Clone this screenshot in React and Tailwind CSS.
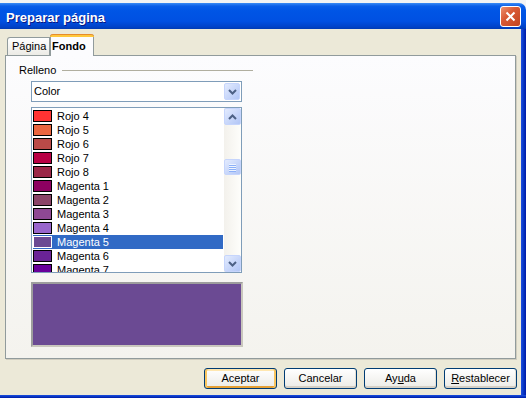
import React from 'react';

const colors = [
  { name: 'Rojo 4', hex: '#ff3333' },
  { name: 'Rojo 5', hex: '#ea6640' },
  { name: 'Rojo 6', hex: '#b94a48' },
  { name: 'Rojo 7', hex: '#b80044' },
  { name: 'Rojo 8', hex: '#9b2748' },
  { name: 'Magenta 1', hex: '#8d0061' },
  { name: 'Magenta 2', hex: '#8a4468' },
  { name: 'Magenta 3', hex: '#8e4893' },
  { name: 'Magenta 4', hex: '#9966cc' },
  { name: 'Magenta 5', hex: '#6b4a93' },
  { name: 'Magenta 6', hex: '#6a2396' },
  { name: 'Magenta 7', hex: '#68009a' },
];

const Chevron = ({ up }) => (
  <svg width="9" height="6" viewBox="0 0 9 6" className="text-[#4d6185]">
    <path d={up ? 'M1 5 L4.5 1.5 L8 5' : 'M1 1 L4.5 4.5 L8 1'} fill="none" stroke="currentColor" strokeWidth="2" />
  </svg>
);

const XpArrowButton = ({ up, className = '' }) => (
  <div className={`flex items-center justify-center rounded-[2px] border border-[#c6d5fc] bg-gradient-to-br from-[#e3ebfe] to-[#b2c6f6] ${className}`}>
    <Chevron up={up} />
  </div>
);

const Button = ({ children, isDefault }) => (
  <div
    className={`w-[73px] h-[21px] rounded-[3px] border border-[#003c74] bg-gradient-to-b from-white to-[#ecebe6] flex items-center justify-center ${
      isDefault
        ? 'shadow-[inset_2px_0_0_#f8c560,inset_-2px_0_0_#f8c560,inset_0_-2px_0_#e5a035,inset_0_2px_0_#ffe7b0]'
        : 'shadow-[inset_0_-2px_0_#d6d0c5,inset_-1px_0_0_#e3e0d6]'
    }`}
  >
    {children}
  </div>
);

export default function App() {
  return (
    <div className="w-[526px] h-[398px] overflow-hidden flex flex-col bg-[#f4f4f4] font-['Liberation_Sans',sans-serif] text-[11px] leading-[13px] text-black select-none">
      <div className="h-[3px] shrink-0" />

      {/* title bar */}
      <div className="h-[26px] shrink-0 flex items-center justify-between rounded-tr-[7px] bg-[linear-gradient(to_bottom,#3b8cf5_0%,#0a5ee8_12%,#0055e5_30%,#0050e2_70%,#0042c8_92%,#003bb3_100%)] pl-[6px] pr-[5px]">
        <span className="pt-[2px] text-white font-bold text-[13px] [text-shadow:1px_1px_0_#0a1883]">Preparar página</span>
        <div className="w-[21px] h-[21px] rounded-[3px] border border-white bg-[linear-gradient(135deg,#ec9070,#d95a35_40%,#c2441f)] flex items-center justify-center">
          <svg width="11" height="11" viewBox="0 0 11 11">
            <path d="M1.5 1.5 L9.5 9.5 M9.5 1.5 L1.5 9.5" stroke="white" strokeWidth="2" />
          </svg>
        </div>
      </div>

      <div className="flex flex-1">
        <div className="flex-1 bg-[#ece9d8] flex flex-col pl-[5px] pt-[5px]">
          {/* tabs */}
          <div className="flex items-end h-[21px] ml-[2px]">
            <div className="w-[43px] h-[18px] border border-b-0 border-[#919b9c] rounded-tl-[3px] bg-gradient-to-b from-white to-[#ecebe6] flex items-center pl-[4px]">
              Página
            </div>
            <div className="relative z-10 -mb-px w-[44px] h-[22px] border-x border-[#919b9c] rounded-t-[3px] bg-[#fcfcfe] flex flex-col">
              <div className="h-[3px] -mx-px rounded-t-[3px] bg-[#ffc83c] border-t border-[#e68b2c]" />
              <div className="flex-1 flex items-center pl-[1px] font-bold">Fondo</div>
            </div>
          </div>

          {/* tab panel */}
          <div className="w-[511px] h-[304px] border border-[#919b9c] shadow-[1px_1px_0_#d0cdbf] bg-gradient-to-b from-[#fcfcfe] to-[#f4f3ee] flex flex-col pl-[13px] pt-[8px]">
            <div className="w-[234px] h-[13px] flex items-center">
              <span>Relleno</span>
              <div className="flex-1 ml-[6px] h-px bg-[#b0ae9f]" />
            </div>

            {/* combobox */}
            <div className="mt-[4px] ml-[12px] w-[211px] h-[21px] border border-[#7f9db9] bg-white flex items-center justify-between pl-[2px]">
              <span>Color</span>
              <XpArrowButton className="w-[16px] h-[17px] mr-px" />
            </div>

            {/* colour list */}
            <div className="mt-[5px] ml-[12px] w-[211px] h-[166px] border border-[#7f9db9] bg-white flex">
              <div className="flex-1 overflow-hidden pt-px px-px">
                {colors.map((c) => {
                  const selected = c.name === 'Magenta 5';
                  return (
                    <div key={c.name} className={`h-[14px] flex items-center ${selected ? 'bg-[#316ac5] text-white' : ''}`}>
                      <div
                        className={`w-[19px] h-[12px] border ${selected ? 'border-white' : 'border-black'}`}
                        style={{ backgroundColor: c.hex }}
                      />
                      <span className="ml-[5px]">{c.name}</span>
                    </div>
                  );
                })}
              </div>
              <div className="w-[17px] flex flex-col bg-gradient-to-r from-[#f3f1ec] to-[#fefefb]">
                <XpArrowButton up className="h-[17px]" />
                <div className="flex-1">
                  <div className="mt-[34px] h-[16px] rounded-[2px] border border-[#c6d5fc] bg-gradient-to-br from-[#e3ebfe] to-[#b2c6f6] flex flex-col items-center justify-center gap-px">
                    <div className="w-[7px] h-px bg-[#eef4fe] shadow-[0_1px_0_#8cb0f8]" />
                    <div className="w-[7px] h-px bg-[#eef4fe] shadow-[0_1px_0_#8cb0f8]" />
                    <div className="w-[7px] h-px bg-[#eef4fe] shadow-[0_1px_0_#8cb0f8]" />
                    <div className="w-[7px] h-px bg-[#eef4fe] shadow-[0_1px_0_#8cb0f8]" />
                  </div>
                </div>
                <XpArrowButton className="h-[17px]" />
              </div>
            </div>

            {/* preview */}
            <div className="mt-[9px] ml-[12px] w-[212px] h-[65px] border-2 border-t-[#9d9d9d] border-l-[#9d9d9d] border-r-[#c9c7bd] border-b-[#c9c7bd] bg-[#6b4a93]" />
          </div>

          {/* buttons */}
          <div className="mt-[9px] pr-[4px] flex justify-end gap-[7px]">
            <Button isDefault>Aceptar</Button>
            <Button>Cancelar</Button>
            <Button>
              Ay<span className="underline">u</span>da
            </Button>
            <Button>
              <span className="underline">R</span>establecer
            </Button>
          </div>
        </div>
        <div className="w-[5px] bg-gradient-to-r from-[#1c4fe0] to-[#0019a8]" />
      </div>
      <div className="h-[3px] shrink-0 bg-gradient-to-b from-[#1c4fe0] to-[#0019a8]" />
    </div>
  );
}
